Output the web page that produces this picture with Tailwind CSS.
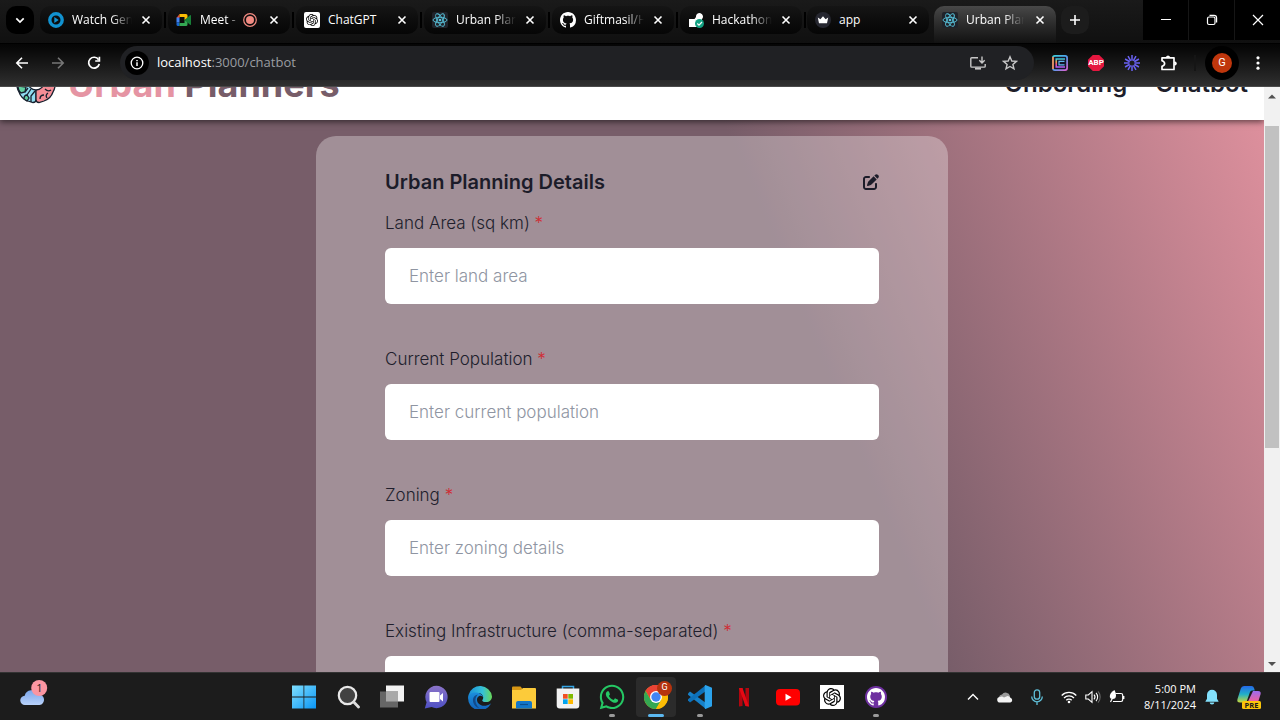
<!DOCTYPE html>
<html lang="en">
<head>
<meta charset="utf-8">
<meta name="viewport" content="width=device-width, initial-scale=1">
<title>Urban Planners</title>
<script src="https://cdn.jsdelivr.net/npm/@tailwindcss/browser@4"></script>
</head>
<body class="flex h-screen flex-col overflow-hidden bg-black font-['Open_Sans','Noto_Sans',sans-serif] text-white">

<svg class="hidden" aria-hidden="true">
  <symbol id="close" viewBox="0 0 16 16"><path d="M4.5 4.5l7 7M11.5 4.5l-7 7" stroke="currentColor" stroke-width="1.6" fill="none"/></symbol>
  <symbol id="react" viewBox="0 0 16 16"><rect width="16" height="16" rx="2" fill="#20232a"/><g fill="none" stroke="#58c4dc" stroke-width="0.9"><ellipse cx="8" cy="8" rx="7" ry="2.7"/><ellipse cx="8" cy="8" rx="7" ry="2.7" transform="rotate(60 8 8)"/><ellipse cx="8" cy="8" rx="7" ry="2.7" transform="rotate(120 8 8)"/></g><circle cx="8" cy="8" r="1.3" fill="#58c4dc"/></symbol>
  <symbol id="openai" viewBox="0 0 24 24"><path fill="currentColor" d="M22.2819 9.8211a5.9847 5.9847 0 0 0-.5157-4.9108 6.0462 6.0462 0 0 0-6.5098-2.9A6.0651 6.0651 0 0 0 4.9807 4.1818a5.9847 5.9847 0 0 0-3.9977 2.9 6.0462 6.0462 0 0 0 .7427 7.0966 5.98 5.98 0 0 0 .511 4.9107 6.051 6.051 0 0 0 6.5146 2.9001A5.9847 5.9847 0 0 0 13.2599 24a6.0557 6.0557 0 0 0 5.7718-4.2058 5.9894 5.9894 0 0 0 3.9977-2.9001 6.0557 6.0557 0 0 0-.7475-7.0729zm-9.022 12.6081a4.4755 4.4755 0 0 1-2.8764-1.0408l.1419-.0804 4.7783-2.7582a.7948.7948 0 0 0 .3927-.6813v-6.7369l2.02 1.1686a.071.071 0 0 1 .038.052v5.5826a4.504 4.504 0 0 1-4.4945 4.4944zm-9.6607-4.1254a4.4708 4.4708 0 0 1-.5346-3.0137l.142.0852 4.783 2.7582a.7712.7712 0 0 0 .7806 0l5.8428-3.3685v2.3324a.0804.0804 0 0 1-.0332.0615L9.74 19.9502a4.4992 4.4992 0 0 1-6.1408-1.6464zM2.3408 7.8956a4.485 4.485 0 0 1 2.3655-1.9728V11.6a.7664.7664 0 0 0 .3879.6765l5.8144 3.3543-2.0201 1.1685a.0757.0757 0 0 1-.071 0l-4.8303-2.7865A4.504 4.504 0 0 1 2.3408 7.872zm16.5963 3.8558L13.1038 8.364 15.1192 7.2a.0757.0757 0 0 1 .071 0l4.8303 2.7913a4.4944 4.4944 0 0 1-.6765 8.1042v-5.6772a.79.79 0 0 0-.407-.667zm2.0107-3.0231l-.142-.0852-4.7735-2.7818a.7759.7759 0 0 0-.7854 0L9.409 9.2297V6.8974a.0662.0662 0 0 1 .0284-.0615l4.8303-2.7866a4.4992 4.4992 0 0 1 6.6802 4.66zM8.3065 12.863l-2.02-1.1638a.0804.0804 0 0 1-.038-.0567V6.0742a4.4992 4.4992 0 0 1 7.3757-3.4537l-.142.0805L8.704 5.459a.7948.7948 0 0 0-.3927.6813zm1.0976-2.3654l2.602-1.4998 2.6069 1.4998v2.9994l-2.5974 1.4997-2.6067-1.4997Z"/></symbol>
  <symbol id="github" viewBox="0 0 16 16"><path fill="currentColor" d="M8 0C3.58 0 0 3.58 0 8c0 3.54 2.29 6.53 5.47 7.59.4.07.55-.17.55-.38 0-.19-.01-.82-.01-1.49-2.01.37-2.53-.49-2.69-.94-.09-.23-.48-.94-.82-1.13-.28-.15-.68-.52-.01-.53.63-.01 1.08.58 1.23.82.72 1.21 1.87.87 2.33.66.07-.52.28-.87.51-1.07-1.78-.2-3.64-.89-3.64-3.95 0-.87.31-1.59.82-2.15-.08-.2-.36-1.02.08-2.12 0 0 .67-.21 2.2.82.64-.18 1.32-.27 2-.27s1.36.09 2 .27c1.53-1.04 2.2-.82 2.2-.82.44 1.1.16 1.92.08 2.12.51.56.82 1.27.82 2.15 0 3.07-1.87 3.75-3.65 3.95.29.25.54.73.54 1.48 0 1.07-.01 1.93-.01 2.2 0 .21.15.46.55.38A8.01 8.01 0 0 0 16 8c0-4.42-3.58-8-8-8z"/></symbol>
</svg>

<!-- Tab strip -->
<div class="flex h-11 shrink-0 items-start border-b border-black bg-linear-to-b from-[#1a1a1a] to-[#101010] pl-1.5 text-xs">
  <button aria-label="Search tabs" class="mt-1.5 mr-1.5 flex size-7 shrink-0 items-center justify-center rounded-[10px] bg-black">
    <svg class="size-4" viewBox="0 0 16 16" fill="none" stroke="#fff" stroke-width="1.7"><path d="M4.3 6.3L8 10l3.700-3.700"/></svg>
  </button>

  <div class="mt-1.5 flex h-7 w-[122px] shrink-0 items-center rounded-[10px] bg-linear-to-b from-[#151515] to-[#060606] px-2">
    <svg class="mr-2 size-4 shrink-0" viewBox="0 0 16 16"><circle cx="8" cy="8" r="6.200" fill="#0d0d0d" stroke="#1192d0" stroke-width="3.400"/><path d="M6.300 5v6l4.400-3z" fill="#1192d0"/></svg>
    <span class="w-[60px] overflow-hidden whitespace-nowrap [mask-image:linear-gradient(90deg,#000_65%,transparent)]">Watch Gen</span>
    <button aria-label="Close tab" class="ml-auto"><svg class="size-4"><use href="#close"/></svg></button>
  </div>
  <div class="mx-0.5 mt-3 h-4 w-0.5 shrink-0 bg-black"></div>

  <div class="mt-1.5 flex h-7 w-[122px] shrink-0 items-center rounded-[10px] bg-linear-to-b from-[#151515] to-[#060606] px-2">
    <svg class="mr-2 size-4 shrink-0" viewBox="0 0 16 16"><path d="M0.500 6h3V2z" fill="#ea4335"/><path d="M3.500 2H10q1.500 0 1.500 1.500V6.500L8.500 8V5h-5z" fill="#fbbc04"/><path d="M0.500 5.500h3v5h-3z" fill="#4285f4"/><path d="M0.500 10.500h3V14H2q-1.500 0-1.500-1.500z" fill="#1967d2"/><path d="M3.500 11h5V8l3 1.500v3Q11.500 14 10 14H3.500z" fill="#34a853"/><path d="M8.500 8l5.500-4.700q1-.6 1 .5v8.400q0 1.100-1 .5z" fill="#188038"/></svg>
    <span class="w-10 whitespace-nowrap [mask-image:linear-gradient(90deg,#000_70%,transparent)]">Meet -</span>
    <svg class="ml-0.5 size-4 shrink-0" viewBox="0 0 16 16"><circle cx="8" cy="8" r="6.300" fill="none" stroke="#f28b82" stroke-width="1.200"/><circle cx="8" cy="8" r="4" fill="#f28b82"/></svg>
    <button aria-label="Close tab" class="ml-auto"><svg class="size-4"><use href="#close"/></svg></button>
  </div>
  <div class="mx-0.5 mt-3 h-4 w-0.5 shrink-0 bg-black"></div>

  <div class="mt-1.5 flex h-7 w-[122px] shrink-0 items-center rounded-[10px] bg-linear-to-b from-[#151515] to-[#060606] px-2">
    <span class="mr-2 flex size-4 shrink-0 items-center justify-center rounded-xs bg-white text-black"><svg class="size-3"><use href="#openai"/></svg></span>
    <span class="whitespace-nowrap">ChatGPT</span>
    <button aria-label="Close tab" class="ml-auto"><svg class="size-4"><use href="#close"/></svg></button>
  </div>
  <div class="mx-0.5 mt-3 h-4 w-0.5 shrink-0 bg-black"></div>

  <div class="mt-1.5 flex h-7 w-[122px] shrink-0 items-center rounded-[10px] bg-linear-to-b from-[#151515] to-[#060606] px-2">
    <svg class="mr-2 size-4 shrink-0"><use href="#react"/></svg>
    <span class="w-[60px] overflow-hidden whitespace-nowrap [mask-image:linear-gradient(90deg,#000_65%,transparent)]">Urban Plan</span>
    <button aria-label="Close tab" class="ml-auto"><svg class="size-4"><use href="#close"/></svg></button>
  </div>
  <div class="mx-0.5 mt-3 h-4 w-0.5 shrink-0 bg-black"></div>

  <div class="mt-1.5 flex h-7 w-[122px] shrink-0 items-center rounded-[10px] bg-linear-to-b from-[#151515] to-[#060606] px-2">
    <svg class="mr-2 size-4 shrink-0 text-white"><use href="#github"/></svg>
    <span class="w-[60px] overflow-hidden whitespace-nowrap [mask-image:linear-gradient(90deg,#000_70%,transparent)]">Giftmasil/H</span>
    <button aria-label="Close tab" class="ml-auto"><svg class="size-4"><use href="#close"/></svg></button>
  </div>
  <div class="mx-0.5 mt-3 h-4 w-0.5 shrink-0 bg-black"></div>

  <div class="mt-1.5 flex h-7 w-[122px] shrink-0 items-center rounded-[10px] bg-linear-to-b from-[#151515] to-[#060606] px-2">
    <svg class="mr-2 size-4 shrink-0" viewBox="0 0 16 16"><path d="M1 7h5.500L8 5a3.500 3.500 0 1 1 6 2v4H9v4H1z" fill="#fff"/><circle cx="11.500" cy="11.500" r="4.500" fill="#12a182"/><path d="M9.300 11.500l1.700 1.700 3-3.200" fill="none" stroke="#fff" stroke-width="1.200"/></svg>
    <span class="w-[60px] overflow-hidden whitespace-nowrap [mask-image:linear-gradient(90deg,#000_65%,transparent)]">Hackathon</span>
    <button aria-label="Close tab" class="ml-auto"><svg class="size-4"><use href="#close"/></svg></button>
  </div>
  <div class="mt-3 mr-px ml-0.5 h-4 w-0.5 shrink-0 bg-black"></div>

  <div class="mt-1.5 flex h-7 w-[122px] shrink-0 items-center rounded-[10px] bg-linear-to-b from-[#151515] to-[#060606] px-2">
    <svg class="mr-2 size-4 shrink-0" viewBox="0 0 16 16"><circle cx="8" cy="8" r="8" fill="#262730"/><path d="M2.800 5.500l2.600 1.700L8 4.200l2.600 3 2.600-1.700-1.200 5.700H4z" fill="#fff"/></svg>
    <span class="whitespace-nowrap">app</span>
    <button aria-label="Close tab" class="ml-auto"><svg class="size-4"><use href="#close"/></svg></button>
  </div>

  <div class="mt-1.5 ml-[5px] flex h-[37px] w-[122px] shrink-0 items-start rounded-t-[10px] bg-linear-to-b from-[#484848] to-[#121212] px-2 pt-1.5">
    <svg class="mr-2 size-4 shrink-0"><use href="#react"/></svg>
    <span class="w-[58px] overflow-hidden whitespace-nowrap [mask-image:linear-gradient(90deg,#000_65%,transparent)]">Urban Plan</span>
    <button aria-label="Close tab" class="ml-auto"><svg class="size-4"><use href="#close"/></svg></button>
  </div>
  <button aria-label="New tab" class="mt-1.5 ml-[5px] flex size-7 shrink-0 items-center justify-center rounded-[10px] bg-[#1c1c1c]">
    <svg class="size-4" viewBox="0 0 16 16" stroke="#fff" stroke-width="1.600"><path d="M8 3v10M3 8h10"/></svg>
  </button>

  <div class="ml-auto flex h-10 shrink-0 gap-px bg-[#161616]">
    <button aria-label="Minimize" class="flex w-[45px] items-center justify-center bg-black"><svg class="size-3" viewBox="0 0 12 12" stroke="#fff"><path d="M1 5.500h10"/></svg></button>
    <button aria-label="Restore" class="flex w-[45px] items-center justify-center bg-black"><svg class="size-3" viewBox="0 0 12 12" fill="none" stroke="#fff" stroke-width="1.200"><rect x="1.500" y="3" width="7.500" height="7.500" rx="1.500"/><path d="M3.500 1.400h4.500q2.600 0 2.600 2.600v4.500"/></svg></button>
    <button aria-label="Close" class="flex w-[45px] items-center justify-center bg-black"><svg class="size-3" viewBox="0 0 12 12" fill="none" stroke="#fff" stroke-width="1.200"><path d="M1 1l10 10M11 1L1 11"/></svg></button>
  </div>
</div>

<!-- Toolbar -->
<div class="relative z-20 flex h-[43px] shrink-0 items-center border-b border-[#4a4a4a] bg-linear-to-b from-[#050505] to-[#303030] pr-3.5 pb-1 pl-3.5">
  <button aria-label="Back" class="mr-5"><svg class="size-4" viewBox="0 0 16 16" fill="none" stroke="#fff" stroke-width="1.600"><path d="M14 8H3M8 2.800L2.800 8 8 13.200"/></svg></button>
  <button aria-label="Forward" class="mr-5"><svg class="size-4" viewBox="0 0 16 16" fill="none" stroke="#777" stroke-width="1.600"><path d="M2 8h11M8 2.800L13.200 8 8 13.200"/></svg></button>
  <button aria-label="Reload" class="mr-[18px]"><svg class="size-4" viewBox="0 0 16 16" fill="none" stroke="#fff" stroke-width="1.700"><path d="M12.600 4.700A5.400 5.400 0 1 0 13.300 9"/><path d="M13.400 1.800V6H9.200"/></svg></button>
  <div class="flex h-[34px] grow items-center rounded-full bg-[#202124] pr-4 pl-[5px]">
    <button aria-label="Site information" class="mr-2 flex size-6 items-center justify-center rounded-full bg-black"><svg class="size-4" viewBox="0 0 16 16" fill="none" stroke="#fff" stroke-width="1.300"><circle cx="8" cy="8" r="5.800"/><path d="M8 7.300v3.700M8 5v1.300" stroke-width="1.500"/></svg></button>
    <span class="text-[13px] text-[#9a9da1]"><span class="text-white">localhost</span>:3000/chatbot</span>
    <button aria-label="Install app" class="mr-4 ml-auto"><svg class="size-4" viewBox="0 0 16 16" fill="none" stroke="#c7c7c7" stroke-width="1.400"><path d="M8 2.700H1.700q-.9 0-.9.900v7.600q0 .9.900.9h12.600q.9 0 .9-.9V9M12 1.500v6M9.300 5.200L12 7.900l2.700-2.700"/><path d="M5 13.600h6" stroke-width="2"/></svg></button>
    <button aria-label="Bookmark"><svg class="size-4" viewBox="0 0 16 16" fill="none" stroke="#c7c7c7" stroke-width="1.400"><path d="M8 1.800l1.800 4.200 4.600.4-3.500 3 1.100 4.500L8 11.500l-4 2.400 1.100-4.500-3.500-3 4.600-.4z"/></svg></button>
  </div>
  <div class="ml-[18px] flex items-center gap-5">
    <button aria-label="Extension E"><svg class="size-4" viewBox="0 0 16 16"><defs><linearGradient id="rb" x1="0" y1="0" x2="1" y2="1"><stop offset="0" stop-color="#40d0d8"/><stop offset=".5" stop-color="#50a0f0"/><stop offset="1" stop-color="#e060d0"/></linearGradient><linearGradient id="ra" x2="0" y2="1"><stop offset="0" stop-color="#30c8e0"/><stop offset=".35" stop-color="#ffb040"/><stop offset=".65" stop-color="#ff5090"/><stop offset="1" stop-color="#b060f8"/></linearGradient></defs><rect x=".9" y=".9" width="14.200" height="14.200" rx="2" fill="#151528" stroke="url(#rb)" stroke-width="1.700"/><path d="M1 2v12" stroke="#f58a50" stroke-width="1.700"/><path d="M13 4H4.200v8H13" fill="none" stroke="url(#ra)" stroke-width="1.500"/><path d="M12.500 6.300H7v3.500h5.500" fill="none" stroke="#60b8f0" stroke-width="1.200"/></svg></button>
    <button aria-label="Adblock Plus" class="flex h-4 w-4 items-center justify-center bg-[#e5173f] font-['Roboto',sans-serif] text-[8px] font-bold [clip-path:polygon(30%_0,70%_0,100%_30%,100%_70%,70%_100%,30%_100%,0_70%,0_30%)]">ABP</button>
    <button aria-label="Loom"><svg class="size-4" viewBox="0 0 16 16" stroke="#6a62f4" stroke-width="1.500"><path d="M8 0v16M0 8h16M4 1.070l8 13.860M12 1.070L4 14.930M1.070 4l13.860 8M14.930 4L1.070 12"/><circle cx="8" cy="8" r="2.600" fill="#1c1c1c" stroke="none"/></svg></button>
    <button aria-label="Extensions"><svg class="h-4 w-[18px]" viewBox="0 0 18 16" fill="none" stroke="#fff" stroke-width="1.700" stroke-linejoin="round"><path d="M2 2.800h12v11.700H2v-3.200q2.600-.6 2.600-2.700T2 5.700z"/><path d="M6.500 2.500q1.500-2.500 3 0M14.500 7q3 1.500 0 3" fill="#fff"/></svg></button>
  </div>
  <div class="ml-4 h-4 w-0.5 bg-[#151515]"></div>
  <button aria-label="Profile" class="ml-[9px] flex size-[34px] items-center justify-center rounded-full bg-black"><span class="flex size-5 items-center justify-center rounded-full bg-[#bf360c] font-['Roboto',sans-serif] text-[11px]">G</span></button>
  <button aria-label="Menu" class="ml-[11px]"><svg class="size-4" viewBox="0 0 16 16" fill="#fff"><circle cx="8" cy="2.800" r="1.600"/><circle cx="8" cy="8" r="1.600"/><circle cx="8" cy="13.200" r="1.600"/></svg></button>
</div>

<!-- Page -->
<div class="flex min-h-0 grow">
  <div class="flex min-w-0 grow flex-col overflow-hidden bg-[linear-gradient(68deg,#775d69_63%,#e0919e_100%)] font-['Inter',sans-serif]">
    <header class="z-10 -mt-[39px] flex h-[72px] shrink-0 items-center bg-white px-4 shadow-[0_2px_6px_rgba(0,0,0,0.55)]">
      <svg class="mr-3 size-10 shrink-0" viewBox="0 0 40 40" stroke="#17202e" stroke-width="1.300">
        <path d="M20 2C12 0 6 5 4 11 0 16 0 23 3 28c2 6 6 8 9 9l5 1.500q3 0 3-3z" fill="#8fdcf0"/>
        <path d="M2 22q0 5 3 7l4-1 1-5z" fill="#62cfa0"/>
        <path d="M8 35q0-4 3-4l2 3-2 3z" fill="#62cfa0"/>
        <path d="M9 28l3-4M11 31l4-6M19 27l-4 5v6" fill="none"/>
        <path d="M20 2c8-2 14 3 16 9 4 5 4 12 1 17-2 6-6 8-9 9l-5 1.500q-3 0-3-3z" fill="#f58d96"/>
        <path d="M24 35q0-4 4-4M31 34q-2-3 1-5M29 25q3 3 6 1" fill="none"/>
        <ellipse cx="20" cy="18" rx="8" ry="8" fill="#fff"/>
      </svg>
      <span class="text-4xl font-bold whitespace-nowrap text-[#e594a3]">Urban <span class="text-[#775d69]">Planners</span></span>
      <nav class="ml-auto flex gap-7 text-2xl leading-7 font-semibold text-[#1e1e2a]">
        <a href="#">Onbording</a>
        <a href="#">Chatbot</a>
      </nav>
    </header>

    <main class="flex shrink-0 justify-center pt-4">
      <form class="w-1/2 rounded-t-[20px] bg-white/31 px-[69px] pt-8 text-[17px] font-light text-[#201e2c]">
        <div class="mb-[15px] flex h-7 items-center justify-between">
          <h2 class="text-xl font-semibold text-[#1c1c29]">Urban Planning Details</h2>
          <button type="button" aria-label="Edit"><svg class="size-4" viewBox="0 0 512 512" fill="#1c1c29"><path d="M471.6 21.7c-21.9-21.9-57.3-21.9-79.2 0L362.3 51.7l97.9 97.9 30.1-30.1c21.9-21.9 21.9-57.3 0-79.2L471.6 21.700zm-299.2 220c-6.1 6.1-10.8 13.6-13.5 21.9l-29.6 88.8c-2.9 8.6-.6 18.1 5.8 24.6s15.9 8.700 24.6 5.800l88.8-29.600c8.200-2.700 15.700-7.400 21.900-13.500L437.700 172.300 339.700 74.300 172.400 241.700zM96 64C43 64 0 107 0 160V416c0 53 43 96 96 96H352c53 0 96-43 96-96V320c0-17.700-14.300-32-32-32s-32 14.300-32 32v96c0 17.700-14.300 32-32 32H96c-17.700 0-32-14.300-32-32V160c0-17.700 14.300-32 32-32h96c17.700 0 32-14.300 32-32s-14.300-32-32-32H96z"/></svg></button>
        </div>
        <div class="mb-[43px]">
          <label for="area" class="mb-[13px] block leading-6">Land Area (sq km) <span class="text-[#d02c34]">*</span></label>
          <input id="area" type="text" placeholder="Enter land area" class="block h-14 w-full rounded-md bg-white px-6 placeholder:text-[#8f95a2]">
        </div>
        <div class="mb-[43px]">
          <label for="population" class="mb-[13px] block leading-6">Current Population <span class="text-[#d02c34]">*</span></label>
          <input id="population" type="text" placeholder="Enter current population" class="block h-14 w-full rounded-md bg-white px-6 placeholder:text-[#8f95a2]">
        </div>
        <div class="mb-[43px]">
          <label for="zoning" class="mb-[13px] block leading-6">Zoning <span class="text-[#d02c34]">*</span></label>
          <input id="zoning" type="text" placeholder="Enter zoning details" class="block h-14 w-full rounded-md bg-white px-6 placeholder:text-[#8f95a2]">
        </div>
        <div>
          <label for="infra" class="mb-[13px] block leading-6">Existing Infrastructure (comma-separated) <span class="text-[#d02c34]">*</span></label>
          <input id="infra" type="text" class="block h-14 w-full rounded-md bg-white px-6">
        </div>
      </form>
    </main>
  </div>

  <div class="flex w-4 shrink-0 flex-col items-center bg-[#f1f1f1]" aria-hidden="true">
    <svg class="h-[39px] w-4 shrink-0" viewBox="0 0 16 39"><path d="M4 11.500h8L8 7.500z" fill="#505050"/></svg>
    <div class="h-[55%] w-3.5 bg-[#c1c1c1]"></div>
    <svg class="mt-auto size-4 shrink-0" viewBox="0 0 16 16"><path d="M4 6h8l-4 4z" fill="#505050"/></svg>
  </div>
</div>

<!-- Taskbar -->
<div class="flex h-12 shrink-0 items-center border-t border-[#333] bg-[#1c1c1c]">
  <button aria-label="Weather" class="flex w-[284px] shrink-0 items-center pb-2 pl-5">
    <svg class="h-[26px] w-7" viewBox="0 0 28 26"><defs><linearGradient id="cl" x2="0" y2="1"><stop offset="0" stop-color="#7ba6ea"/><stop offset="1" stop-color="#b9d2fb"/></linearGradient></defs><path d="M5 25a4.600 4.600 0 0 1-.3-9.200A7 7 0 0 1 18 14.500a5.300 5.300 0 0 1 1.500 10.500z" fill="url(#cl)"/><circle cx="19.200" cy="8" r="8" fill="#fb96a2"/><text x="19.500" y="12" text-anchor="middle" font-size="11" fill="#1c1c1c" font-family="Open Sans">1</text></svg>
  </button>
  <div class="flex shrink-0 gap-1">
    <button aria-label="Start" class="flex h-10 w-10 items-center justify-center"><svg class="size-6" viewBox="0 0 24 24"><defs><linearGradient id="win" x2="1" y2="1"><stop offset="0" stop-color="#7fdfff"/><stop offset="1" stop-color="#0a95f5"/></linearGradient></defs><path d="M0 .5h11.500v11H0zM12.300.5H24v11H12.300zM0 12.500h11.500v11H0zM12.300 12.500H24v11H12.300z" fill="url(#win)"/></svg></button>
    <button aria-label="Search" class="flex h-10 w-10 items-center justify-center"><svg class="size-6" viewBox="0 0 24 24"><circle cx="11.500" cy="10.500" r="8.700" fill="#424242" stroke="#e8e8e8" stroke-width="2.200"/><path d="M17.700 17l4.800 5" stroke="#ddd" stroke-width="2.800" stroke-linecap="round"/></svg></button>
    <button aria-label="Task view" class="flex h-10 w-10 items-center justify-center"><svg class="size-6" viewBox="0 0 24 24"><path d="M6 .5h18v16H6z" fill="#f2f2f2"/><path d="M0 6.500h18v16H0z" fill="#666"/><path d="M6 6.500h12v10H6z" fill="#a8a8a8"/></svg></button>
    <button aria-label="Chat" class="flex h-10 w-10 items-center justify-center"><svg class="size-6" viewBox="0 0 24 24"><defs><linearGradient id="ch" x2="0" y2="1"><stop offset="0" stop-color="#8b74c8"/><stop offset="1" stop-color="#4e50c4"/></linearGradient></defs><path d="M12.500.8a11.200 11.200 0 1 1-4.900 21.300L.8 23.400l1.800-6.200A11.200 11.200 0 0 1 12.500.8z" fill="url(#ch)"/><path d="M6.500 7h8q1 0 1 1v8q0 1-1 1h-8q-1 0-1-1V8q0-1 1-1zM16 10.500L19 8v8.500L16 14z" fill="#fff"/></svg></button>
    <button aria-label="Edge" class="flex h-10 w-10 items-center justify-center"><svg class="size-6" viewBox="0 0 24 24"><defs><linearGradient id="e1"><stop offset="0" stop-color="#1b90d8"/><stop offset=".6" stop-color="#35c1d8"/><stop offset="1" stop-color="#68d858"/></linearGradient><linearGradient id="e2" x2="0" y2="1"><stop offset="0" stop-color="#1b8fdc"/><stop offset="1" stop-color="#1261b8"/></linearGradient></defs><path d="M.5 10A12 12 0 0 1 24 11.500c0 3.500-2.600 5.600-5.600 5.600-2.600 0-4.200-.9-4.200-1.700 0-.6 1-1.200 1-3 0-2.500-2.300-4.400-5.200-4.400C5 8 1.500 10.500.5 14z" fill="url(#e1)"/><path d="M.2 12C1 8.500 5 6.800 9 7.600c3.500.7 6 2.700 6.200 4.900-.5-1.500-2.300-2.300-4-1.500-2.600 1.300-3 5-.6 7.500 3 3.200 8 3 11.800.2.400-.2.500 0 .3.300A12 12 0 0 1 .2 12z" fill="url(#e2)"/><path d="M10 9.500c-3 2.500-4.200 8.500 1.500 14C7 22 4.500 18 5 14c.3-2.200 2.500-4.300 5-4.500z" fill="#114a8b"/></svg></button>
    <button aria-label="File Explorer" class="flex h-10 w-10 items-center justify-center"><svg class="size-6" viewBox="0 0 24 24"><path d="M1 1.500h7.500l2.500 3V9H0V2.500q0-1 1-1z" fill="#d89714"/><path d="M0 5h9l2-2h12q1 0 1 1v19.500H0z" fill="#fccb3a"/><path d="M4 23.500V18q0-2 2-2h12q2 0 2 2v5.500z" fill="#1277c9"/><path d="M8 19.500h8" stroke="#0b4f8f" stroke-width="1.200"/></svg></button>
    <button aria-label="Microsoft Store" class="flex h-10 w-10 items-center justify-center"><svg class="size-6" viewBox="0 0 24 24"><path d="M6.500 5V1.500h11V5" fill="none" stroke="#36a6e6" stroke-width="1.500"/><path d="M.7 3.500h22.600v17q0 3-3 3H3.700q-3 0-3-3z" fill="#f2f2f2"/><path d="M7 9h4.700v4.700H7z" fill="#f25022"/><path d="M12.300 9H17v4.700h-4.700z" fill="#7fba00"/><path d="M7 14.300h4.700V19H7z" fill="#00a4ef"/><path d="M12.300 14.300H17V19h-4.700z" fill="#ffb900"/></svg></button>
    <button aria-label="WhatsApp" class="relative flex h-10 w-10 items-center justify-center"><svg class="size-7" viewBox="0 0 448 512" fill="#25c864"><path d="M380.900 97.100C339 55.100 283.200 32 223.900 32c-122.400 0-222 99.600-222 222 0 39.100 10.200 77.300 29.600 111L0 480l117.700-30.900c32.400 17.700 68.900 27 106.100 27h.1c122.300 0 224.100-99.600 224.100-222 0-59.300-25.200-115-67.100-157zm-157 341.600c-33.200 0-65.700-8.900-94-25.700l-6.700-4-69.800 18.300L72 359.200l-4.400-7c-18.500-29.400-28.200-63.300-28.200-98.200 0-101.700 82.800-184.500 184.600-184.500 49.300 0 95.600 19.200 130.400 54.100 34.800 34.900 56.200 81.200 56.100 130.500 0 101.800-84.900 184.600-186.600 184.600zm101.200-138.200c-5.500-2.800-32.800-16.200-37.900-18-5.100-1.900-8.800-2.800-12.500 2.800-3.700 5.600-14.300 18-17.600 21.800-3.200 3.700-6.500 4.200-12 1.400-32.600-16.300-54-29.100-75.500-66-5.700-9.800 5.700-9.100 16.300-30.300 1.800-3.700.9-6.900-.5-9.700-1.400-2.800-12.500-30.100-17.100-41.200-4.500-10.800-9.100-9.300-12.500-9.500-3.200-.2-6.900-.2-10.600-.2-3.700 0-9.700 1.400-14.800 6.900-5.100 5.600-19.400 19-19.400 46.300 0 27.300 19.900 53.700 22.600 57.400 2.800 3.700 39.100 59.700 94.800 83.800 35.200 15.200 49 16.500 66.600 13.900 10.700-1.600 32.800-13.400 37.400-26.400 4.600-13 4.600-24.100 3.200-26.400-1.300-2.500-5-3.900-10.500-6.600z"/></svg><span class="absolute bottom-0 h-[3px] w-1.5 rounded-full bg-[#9a9a9a]"></span></button>
    <button aria-label="Chrome" class="relative flex h-10 w-10 items-center justify-center rounded bg-[#2b2b2b]"><svg class="size-6" viewBox="0 0 24 24"><circle cx="12" cy="12" r="12" fill="#fbbc05"/><path d="M12 12L1.600 6A12 12 0 0 1 22.400 6z" fill="#ea4335"/><path d="M12 6h10.400A12 12 0 0 0 1.600 6L6.800 15z" fill="#ea4335"/><path d="M1.600 6a12 12 0 0 0 10.400 18l5.200-9L12 12 6.800 15z" fill="#34a853"/><path d="M12 24a12 12 0 0 0 10.400-18H12l5.200 9z" fill="#fbbc05"/><circle cx="12" cy="12" r="6" fill="#fff"/><circle cx="12" cy="12" r="4.700" fill="#4285f4"/></svg><span class="absolute top-1 right-1 flex size-[15px] items-center justify-center rounded-full bg-[#b5330e] font-['Roboto',sans-serif] text-[9px]">G</span><span class="absolute bottom-0 h-[3px] w-4 rounded-full bg-[#5cb8f0]"></span></button>
    <button aria-label="Visual Studio Code" class="relative flex h-10 w-10 items-center justify-center"><svg class="size-6" viewBox="0 0 24 24"><path d="M0 8.500L2 6.500 18 18v6L0 9.700z" fill="#1681c9"/><path d="M0 15.500L2 17.500 18 6V0L0 14.300z" fill="#0d71ba"/><path d="M17.500 0L24 2.800v18.400L17.500 24q-.8-.3-.8-1.300V1.300q0-1 .8-1.300z" fill="#2ba3ec"/></svg><span class="absolute bottom-0 h-[3px] w-1.5 rounded-full bg-[#9a9a9a]"></span></button>
    <button aria-label="Netflix" class="flex h-10 w-10 items-center justify-center"><svg class="size-6" viewBox="0 0 24 24"><path d="M7 3h3.500v18L7 21.500zM13.500 3H17v18.500l-3.500-.5z" fill="#b1060f"/><path d="M7 3h3.500L17 21.500l-3.600-.5z" fill="#e50914"/></svg></button>
    <button aria-label="YouTube" class="flex h-10 w-10 items-center justify-center"><svg class="size-6" viewBox="0 0 24 24"><rect y="4" width="24" height="16.500" rx="4" fill="#f00"/><path d="M9.500 8.700v7l6-3.500z" fill="#fff"/></svg></button>
    <button aria-label="ChatGPT" class="flex h-10 w-10 items-center justify-center"><span class="flex size-6 items-center justify-center bg-white text-black"><svg class="size-[18px]"><use href="#openai"/></svg></span></button>
    <button aria-label="GitHub Desktop" class="relative flex h-10 w-10 items-center justify-center"><span class="flex size-[22px] items-center justify-center rounded-full bg-[#6e30a0] text-white"><svg class="size-[18px]"><use href="#github"/></svg></span><span class="absolute bottom-0 h-[3px] w-1.5 rounded-full bg-[#9a9a9a]"></span></button>
  </div>

  <div class="ml-auto flex shrink-0 items-center pr-[18px]">
    <button aria-label="Hidden icons" class="mr-4"><svg class="size-4" viewBox="0 0 16 16" fill="none" stroke="#fff" stroke-width="1.400"><path d="M3 10.500l5-5 5 5"/></svg></button>
    <button aria-label="OneDrive" class="mr-4"><svg class="size-4" viewBox="0 0 16 16"><path d="M2 10a4 4 0 0 1 3-4.500 4.500 4.500 0 0 1 8 1.500l-1 4z" fill="#9a9a9a"/><path d="M3 13.500a2.800 2.800 0 0 1 0-5.600Q5 7 7 8.500L10.500 7q2 0 3 1.700a2.500 2.500 0 0 1-.2 4.800z" fill="#f3f3f3"/></svg></button>
    <button aria-label="Microphone" class="mr-4"><svg class="size-4" viewBox="0 0 16 16" fill="none" stroke="#5fbfd8" stroke-width="1.300"><rect x="5.300" y=".8" width="5.400" height="9.400" rx="2.700"/><path d="M2.700 7.500a5.300 5.300 0 0 0 10.600 0M8 12.800V16"/></svg></button>
    <button aria-label="Network, volume and battery" class="mr-4 flex gap-2">
      <svg class="size-4" viewBox="0 0 16 16" fill="none" stroke="#fff" stroke-width="1.300"><path d="M.7 6.500a10.300 10.300 0 0 1 14.600 0M3 9a7 7 0 0 1 10 0M5.300 11.300a3.800 3.800 0 0 1 5.400 0"/><circle cx="8" cy="13" r="1.300" fill="#fff" stroke="none"/></svg>
      <svg class="size-4" viewBox="0 0 16 16" fill="none" stroke="#fff" stroke-width="1.100"><path d="M.8 6v4h2.500L7 13.300V2.700L3.300 6z"/><path d="M9 5.700a3.500 3.500 0 0 1 0 4.600M11 3.900a6 6 0 0 1 0 8.200"/><path d="M13 2.300a8.500 8.500 0 0 1 0 11.400" stroke="#666"/></svg>
      <svg class="size-4" viewBox="0 0 16 16" fill="none" stroke="#fff" stroke-width="1.200"><path d="M6.500 4.500H12q1.700 0 1.700 1.700v4.600q0 1.700-1.700 1.700H4M14.800 7v3"/><path d="M5.500 1Q.5 4 .8 8q.3 2 2.700 2 3.500 0 3.500-3.500Q7 4 5.500 1z" fill="#fff" stroke="none"/><path d="M3.500 9L1.500 13"/></svg>
    </button>
    <div class="mr-2 w-[55px] text-right text-[11px] leading-4 whitespace-nowrap"><div>5:00 PM</div><div>8/11/2024</div></div>
    <button aria-label="Notifications" class="mr-4"><svg class="size-4" viewBox="0 0 16 16" fill="#82e0fb"><path d="M8 .8a5 5 0 0 1 5 5v4l1.500 2.400q.2.600-.5.600H2q-.7 0-.5-.6L3 9.800v-4a5 5 0 0 1 5-5zM5.700 13.500h4.600a2.300 2 0 0 1-4.600 0z"/></svg></button>
    <button aria-label="Copilot"><svg class="h-6 w-[26px]" viewBox="0 0 26 24"><defs><linearGradient id="c1" x2="0" y2="1"><stop offset="0" stop-color="#2468e8"/><stop offset=".5" stop-color="#22b0c8"/><stop offset="1" stop-color="#c8d838"/></linearGradient><linearGradient id="c2" x2="0" y2="1"><stop offset="0" stop-color="#9a6cf0"/><stop offset="1" stop-color="#f0609a"/></linearGradient></defs><path d="M8 1h7.500q2 0 2.500 2l.8 2.500H16q-1.600 0-2 1.500l-3 8.500q-.7 2-3 2H4q-3.500 0-2.500-3.500L4.800 3.500Q5.500 1 8 1z" fill="url(#c1)"/><path d="M17 6h5q3.500 0 2.500 3.500l-2.200 7H12z" fill="url(#c2)"/><rect x="6" y="16" width="19" height="8" rx="1.500" fill="#fbc50a"/><text x="15.500" y="22.800" text-anchor="middle" font-size="7.500" font-weight="700" fill="#1c1c1c" font-family="Open Sans">PRE</text></svg></button>
  </div>
</div>
</body>
</html>
